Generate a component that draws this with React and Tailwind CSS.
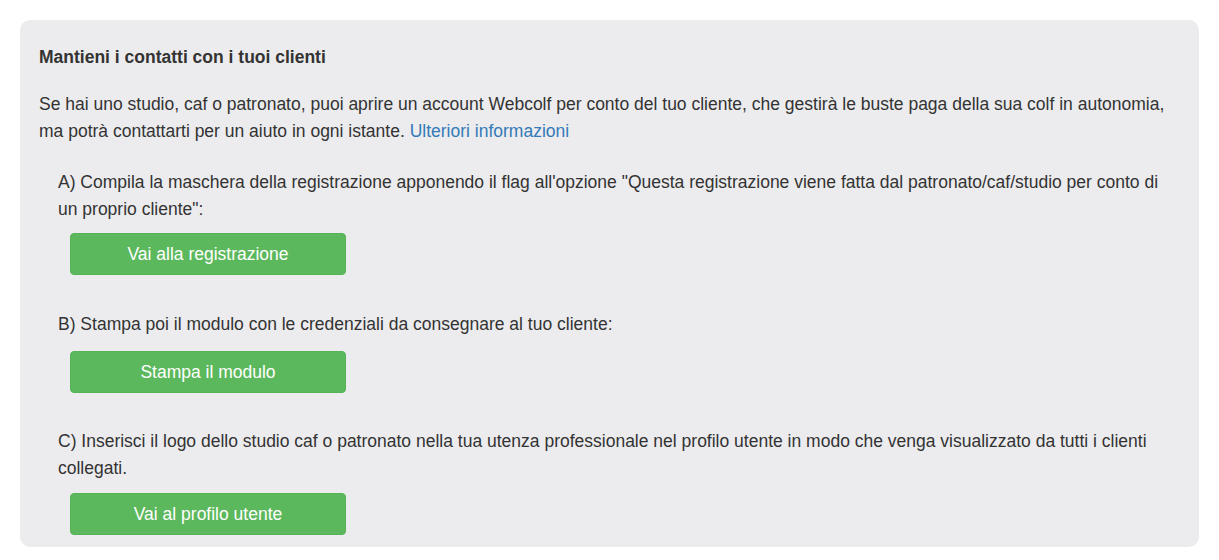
// Panel "Mantieni i contatti con i tuoi clienti"
const steps = [
  {
    text: 'A) Compila la maschera della registrazione apponendo il flag all\'opzione "Questa registrazione viene fatta dal patronato/caf/studio per conto di un proprio cliente":',
    label: 'Vai alla registrazione',
    gapTop: 'mt-6',
    btnTop: 'mt-[10px]',
  },
  {
    text: 'B) Stampa poi il modulo con le credenziali da consegnare al tuo cliente:',
    label: 'Stampa il modulo',
    gapTop: 'mt-[36px]',
    btnTop: 'mt-[13px]',
  },
  {
    text: 'C) Inserisci il logo dello studio caf o patronato nella tua utenza professionale nel profilo utente in modo che venga visualizzato da tutti i clienti collegati.',
    label: 'Vai al profilo utente',
    gapTop: 'mt-[35px]',
    btnTop: 'mt-[11px]',
  },
]

export default function App() {
  return (
    <div className="bg-white min-h-[560px] pt-5 px-5 font-['Liberation_Sans',Arial,sans-serif] text-[17.5px] leading-[27px] text-[#333333]">
      <div className="w-[1179px] rounded-[10px] bg-[#ececee] pt-6 pb-3 pl-[19px] pr-[18px]">
        {/* ── Header ── */}
        <h3 className="font-bold">Mantieni i contatti con i tuoi clienti</h3>

        <p className="mt-5">
          Se hai uno studio, caf o patronato, puoi aprire un account Webcolf per conto del tuo cliente, che gestirà le buste paga della sua colf in autonomia, ma potrà contattarti per un aiuto in ogni istante.{' '}
          <a href="#" className="text-[#337ab7]">Ulteriori informazioni</a>
        </p>

        {/* ── Steps ── */}
        {steps.map((s) => (
          <div key={s.label} className={`pl-[19px] ${s.gapTop}`}>
            <p>{s.text}</p>
            <button
              className={`ml-3 ${s.btnTop} flex items-center justify-center w-[276px] h-[42px] rounded-[4px] bg-[#5cb85c] border border-[#55b255] text-white text-[17.5px]`}
            >
              {s.label}
            </button>
          </div>
        ))}
      </div>
    </div>
  )
}
